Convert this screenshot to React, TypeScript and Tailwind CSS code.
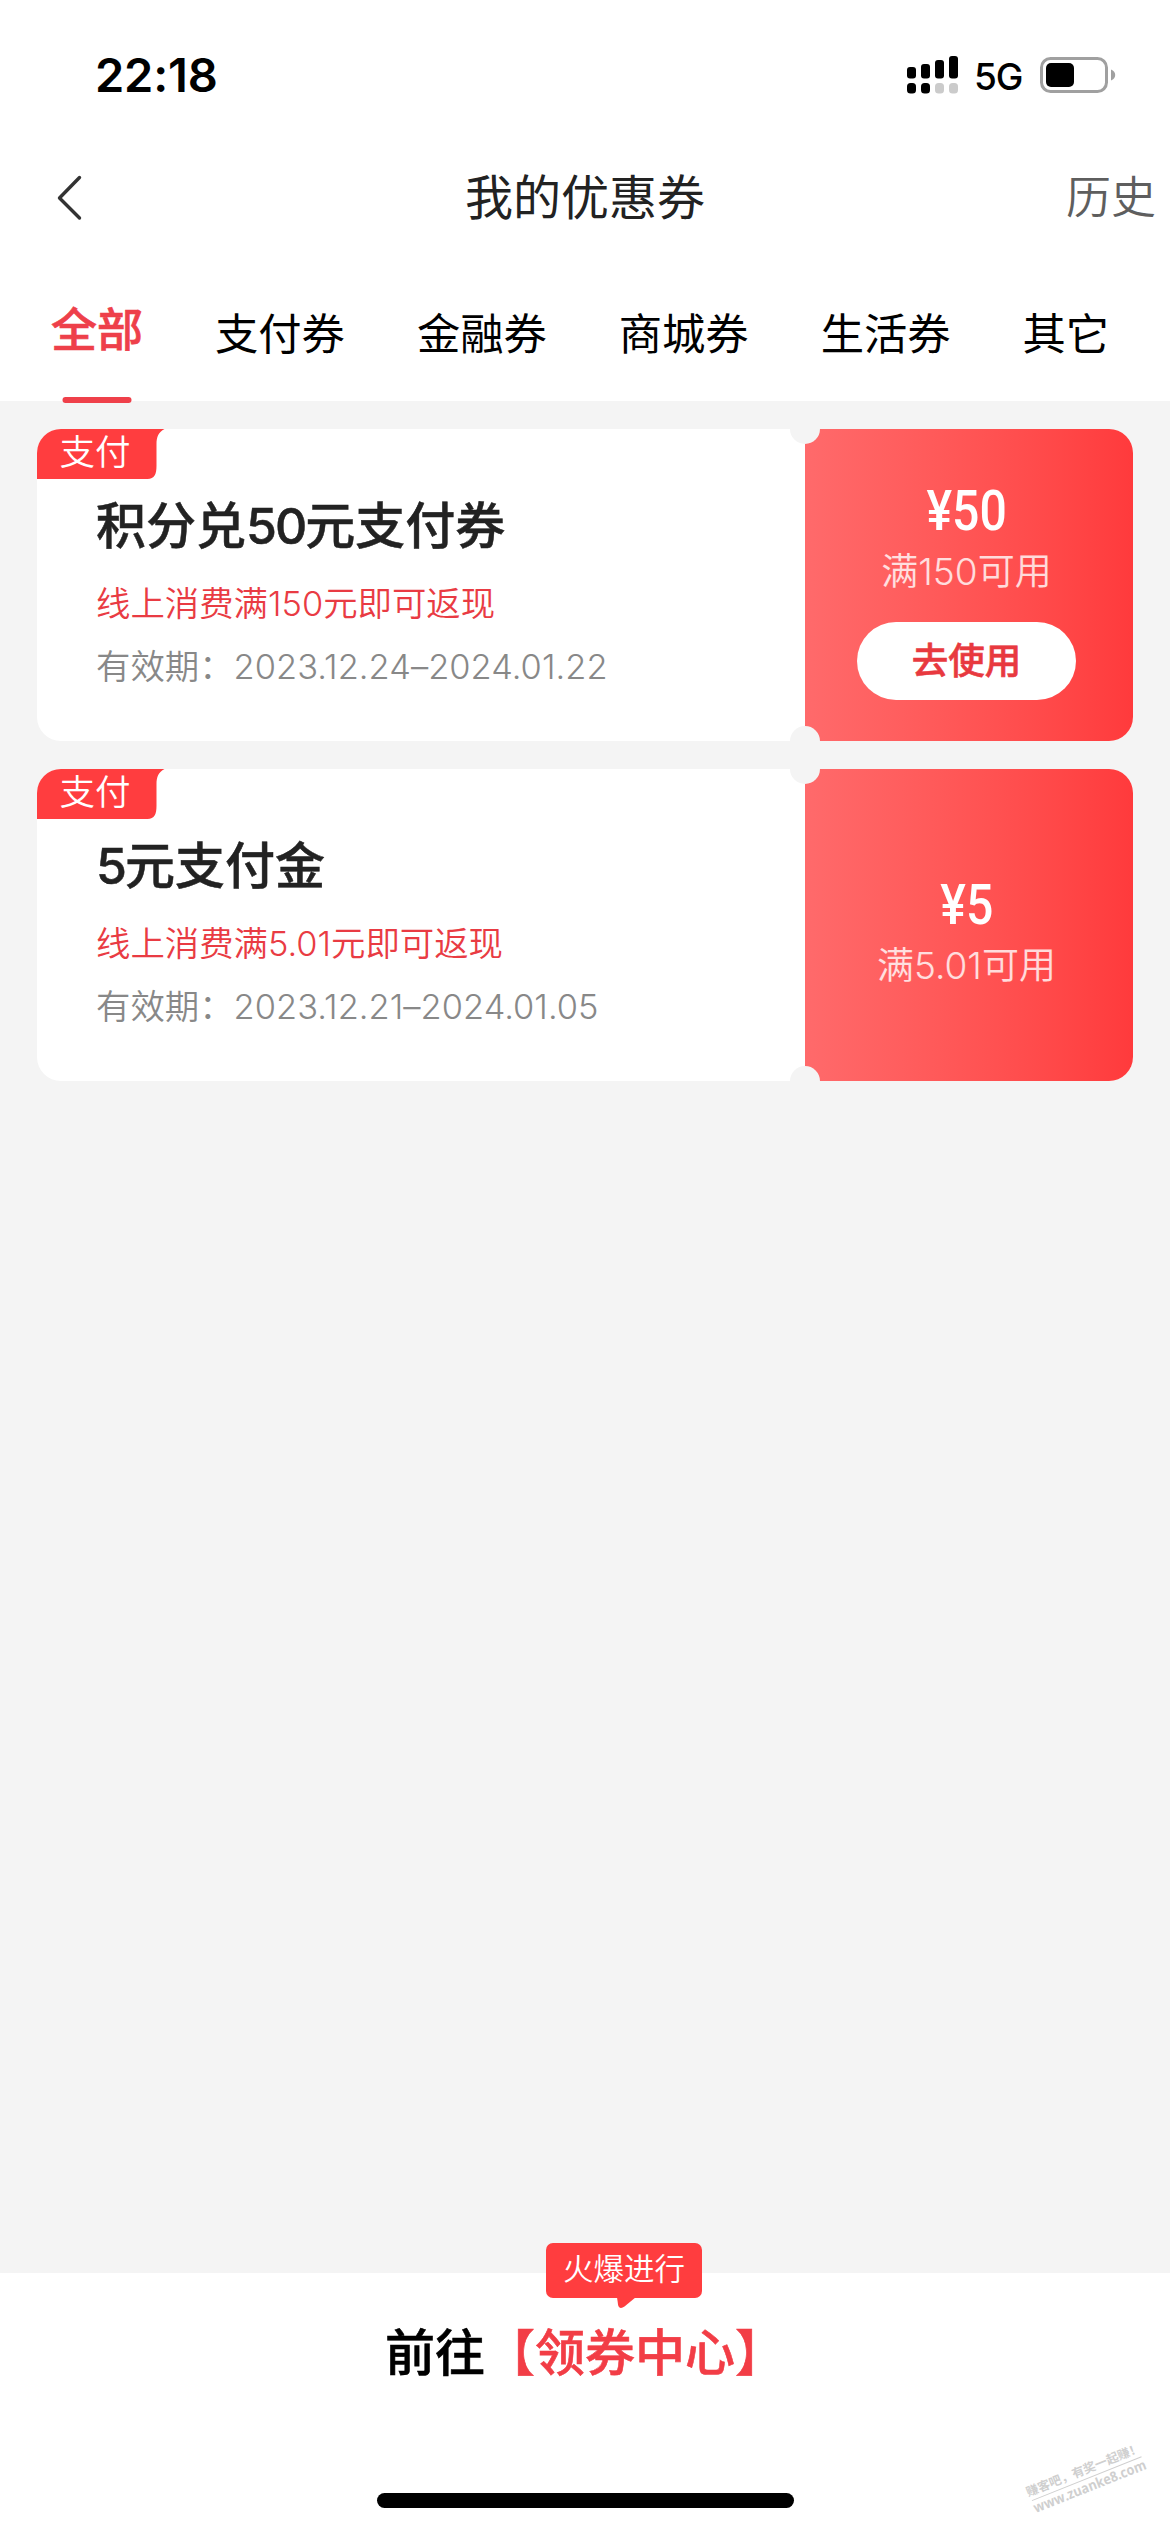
import { clsx } from 'clsx';

const TABS = ['全部', '支付券', '金融券', '商城券', '生活券', '其它'];

type Coupon = {
  id: number;
  tag: string;
  title: [string, string, string];
  rule: string;
  period: string;
  amount: string;
  limit: string;
  usable: boolean;
};

const COUPONS: Coupon[] = [
  {
    id: 1,
    tag: '支付',
    title: ['积分兑', '50', '元支付券'],
    rule: '线上消费满150元即可返现',
    period: '2023.12.24–2024.01.22',
    amount: '50',
    limit: '150',
    usable: true,
  },
  {
    id: 2,
    tag: '支付',
    title: ['', '5', '元支付金'],
    rule: '线上消费满5.01元即可返现',
    period: '2023.12.21–2024.01.05',
    amount: '5',
    limit: '5.01',
    usable: false,
  },
];

function StatusBar() {
  return (
    <div className="flex h-[148px] shrink-0 items-center justify-between pt-px pl-[95px] pr-[54px]">
      <span className="text-[47px] leading-[60px] font-semibold tracking-[-0.2px] text-black">22:18</span>
      <div className="flex items-center">
        <svg width="52" height="38" viewBox="0 0 52 38">
          <rect x="0" y="11" width="9" height="11.5" rx="3" />
          <rect x="14" y="8" width="9" height="14.5" rx="3" />
          <rect x="28" y="4" width="9" height="18.5" rx="3" />
          <rect x="42" y="0" width="9" height="22.5" rx="3" />
          <rect x="0" y="27" width="9" height="10.5" rx="3.5" />
          <rect x="14" y="27" width="9" height="10.5" rx="3.5" />
          <rect x="28" y="27" width="9" height="10.5" rx="3.5" fill="#cbcbcb" />
          <rect x="42" y="27" width="9" height="10.5" rx="3.5" fill="#cbcbcb" />
        </svg>
        <span className="mt-1 ml-[15px] w-[66px] text-[37px] leading-[40px] font-medium tracking-[-1px] text-black">5G</span>
        <svg width="76" height="36" viewBox="0 0 76 36">
          <rect x="1.5" y="1.5" width="65" height="33" rx="9" fill="none" stroke="#a0a0a0" strokeWidth="3" />
          <rect x="6" y="6" width="28" height="24" rx="5" />
          <path d="M71 12.5c2.8 1 4.200 3 4.200 5.500s-1.400 4.500-4.200 5.500z" fill="#a0a0a0" />
        </svg>
      </div>
    </div>
  );
}

function NavBar() {
  return (
    <header className="grid h-[98px] shrink-0 grid-cols-3 items-center pl-[56px] pr-[14px]">
      <svg width="28" height="48" viewBox="0 0 28 48" fill="none" stroke="#333" strokeWidth="3.4" strokeLinecap="round" strokeLinejoin="round">
        <path d="M23.500 4.500 3.500 25l20 20" />
      </svg>
      <h1 className="-ml-[42px] pt-[2px] text-center text-[48px] leading-[60px] whitespace-nowrap text-[#222]">我的优惠券</h1>
      <button className="pt-[2px] text-right text-[45px] leading-[60px] font-[350] text-[#5e5e5e]">历史</button>
    </header>
  );
}

function Tabs() {
  return (
    <nav className="flex h-[155px] shrink-0 gap-[72px] pl-[51px]">
      {TABS.map((tab, idx) => (
        <div
          key={tab}
          className={clsx(
            'relative flex shrink-0 items-center',
            idx === 0
              ? 'pt-[12px] text-[46px] font-medium text-[#ee404a] [-webkit-text-stroke:0.6px]'
              : 'pt-[21px] text-[43.3px] text-black'
          )}
        >
          {tab}
          {idx === 0 && (
            <span className="absolute bottom-[-2px] left-1/2 h-[6px] w-[69px] -translate-x-1/2 rounded-full bg-[#ef404a]" />
          )}
        </div>
      ))}
    </nav>
  );
}

function CouponCard({ coupon }: { coupon: Coupon }) {
  return (
    <article className="relative flex h-[312px] overflow-hidden rounded-[24px] bg-white">
      <div className="relative w-[768px] pt-[66px] pl-[59px]">
        <div className="absolute top-0 left-0 h-[50px] w-[128px]">
          <svg className="absolute inset-0" width="128" height="50" viewBox="0 0 128 50">
            <path d="M0 0h127.500c-6 3-8 8-8 15v22c0 8-2 13-9 13H0z" fill="#ff3d3f" />
          </svg>
          <span className="relative block pl-[22.500px] text-[35.500px] leading-[47px] font-[350] text-white">{coupon.tag}</span>
        </div>
        <h2 className="text-[50px] leading-[62px] font-medium whitespace-nowrap text-[#222] [-webkit-text-stroke:0.5px]">
          {coupon.title[0]}
          <span className="tracking-[-2px]">{coupon.title[1]}</span>
          {coupon.title[2]}
        </h2>
        <p className="mt-[16px] text-[34.400px] leading-[62px] font-[350] whitespace-nowrap text-[#e93b43]">{coupon.rule}</p>
        <p className="mt-px text-[34.400px] leading-[62px] font-[350] whitespace-nowrap text-[#888]">
          有效期：<span className="tracking-[0.05px]">{coupon.period}</span>
        </p>
      </div>

      <div className="flex flex-1 flex-col items-center justify-center bg-linear-to-r from-[#ff6a6b] to-[#ff3a3c] pr-[5px]">
        <div className="origin-center scale-x-[0.86] font-[Roboto] text-[56px] leading-[82px] font-medium text-white">
          ¥{coupon.amount}
        </div>
        <div className="text-[37px] leading-[40px] font-[350] text-white/80">满{coupon.limit}可用</div>
        {coupon.usable && (
          <button className="mt-[30px] h-[78px] w-[219px] rounded-full bg-white text-[36.500px] leading-[75px] font-medium text-[#e8393f] [-webkit-text-stroke:0.6px]">
            去使用
          </button>
        )}
      </div>

      <span className="absolute -top-[15px] left-[753px] size-[30px] rounded-full bg-[#f4f4f4]" />
      <span className="absolute -bottom-[15px] left-[753px] size-[30px] rounded-full bg-[#f4f4f4]" />
    </article>
  );
}

function BottomBar() {
  return (
    <footer className="relative flex h-[259px] shrink-0 flex-col items-center justify-between bg-white pt-[45px] pb-[24px]">
      <div className="absolute -top-[30px] left-[546px] h-[55px] w-[156px] rounded-[7px] bg-[#ff3d3f] text-center text-[30.500px] leading-[51px] font-[350] text-white">
        火爆进行
        <svg className="absolute top-[54px] left-[71px]" width="20" height="12" viewBox="0 0 20 12">
          <path d="M0 0h19L7.500 9.500C4 12 1.500 11 1 7.500z" fill="#ff3d3f" />
        </svg>
      </div>
      <p className="text-[50px] leading-[70px] font-medium text-black [-webkit-text-stroke:0.6px]">
        前往<span className="text-[#f23d46]">【领券中心】</span>
      </p>
      <div className="h-[15px] w-[417px] rounded-full bg-black" />
      <svg className="absolute right-0 bottom-0 font-bold" width="170" height="110" viewBox="0 0 170 110" fill="#cfcfcf">
        <g transform="translate(31 79) rotate(-21.800)">
          <text x="-1" y="-5" fontSize="12.300">赚客吧，有奖一起赚！</text>
          <path d="M1 0h118" stroke="#cfcfcf" strokeWidth="1" />
          <text x="0" y="13" fontSize="14" textLength="120" lengthAdjust="spacingAndGlyphs" className="font-['Open_Sans']">
            www.zuanke8.com
          </text>
        </g>
      </svg>
    </footer>
  );
}

export default function App() {
  return (
    <div className="flex h-[2532px] w-[1170px] flex-col overflow-hidden bg-white font-[Inter,'Noto_Sans_CJK_SC',sans-serif]">
      <StatusBar />
      <NavBar />
      <Tabs />
      <main className="flex flex-1 flex-col gap-[28px] bg-[#f4f4f4] px-[37px] pt-[28px]">
        {COUPONS.map((coupon) => (
          <CouponCard key={coupon.id} coupon={coupon} />
        ))}
      </main>
      <BottomBar />
    </div>
  );
}
